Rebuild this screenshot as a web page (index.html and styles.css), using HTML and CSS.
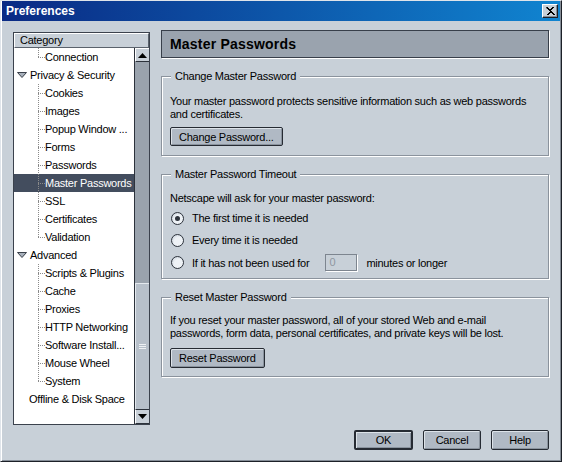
FILE: index.html
```html
<!DOCTYPE html>
<html>
<head>
<meta charset="utf-8">
<link rel="stylesheet" href="styles.css">
</head>
<body>
<div class="window">
  <div class="titlebar">
    <span class="title">Preferences</span>
    <span class="close"><svg width="10" height="9" viewBox="0 0 10 9"><path d="M1 0h2v1h1v1h2v-1h1v-1h2v1h-1v1h-1v1h-1v1h1v1h1v1h1v1h1v1h-2v-1h-1v-1h-2v1h-1v1h-2v-1h1v-1h1v-1h1v-1h-1v-1h-1v-1h-1z" fill="#000"/></svg></span>
  </div>
  <div class="content">
    <div class="tree">
      <div class="tree-head">Category</div>
      <div class="tree-body">
        <div class="rows">
          <div class="row child"><span class="branch last"></span>Connection</div>
          <div class="row top"><svg class="twisty" width="10" height="6" viewBox="0 0 10 6"><path d="M0.5 0.5h9l-4.5 5z" fill="#a7b0bb" stroke="#3a404a"/></svg>Privacy &amp; Security</div>
          <div class="row child"><span class="branch"></span>Cookies</div>
          <div class="row child"><span class="branch"></span>Images</div>
          <div class="row child"><span class="branch"></span>Popup Window ...</div>
          <div class="row child"><span class="branch"></span>Forms</div>
          <div class="row child"><span class="branch"></span>Passwords</div>
          <div class="row child selected"><span class="branch"></span>Master Passwords</div>
          <div class="row child"><span class="branch"></span>SSL</div>
          <div class="row child"><span class="branch"></span>Certificates</div>
          <div class="row child"><span class="branch last"></span>Validation</div>
          <div class="row top"><svg class="twisty" width="10" height="6" viewBox="0 0 10 6"><path d="M0.5 0.5h9l-4.5 5z" fill="#a7b0bb" stroke="#3a404a"/></svg>Advanced</div>
          <div class="row child"><span class="branch"></span>Scripts &amp; Plugins</div>
          <div class="row child"><span class="branch"></span>Cache</div>
          <div class="row child"><span class="branch"></span>Proxies</div>
          <div class="row child"><span class="branch"></span>HTTP Networking</div>
          <div class="row child"><span class="branch"></span>Software Install...</div>
          <div class="row child"><span class="branch"></span>Mouse Wheel</div>
          <div class="row child"><span class="branch last"></span>System</div>
          <div class="row leaf">Offline &amp; Disk Space</div>
        </div>
        <div class="scrollbar">
          <div class="sb-btn"><svg width="9" height="5" viewBox="0 0 9 5"><path d="M4.5 0L9 5H0z" fill="#000"/></svg></div>
          <div class="sb-track"></div>
          <div class="sb-thumb"><span class="grip"></span></div>
          <div class="sb-btn down"><svg width="9" height="5" viewBox="0 0 9 5"><path d="M0 0h9L4.5 5z" fill="#000"/></svg></div>
        </div>
      </div>
    </div>
    <div class="main">
      <div class="page-head">Master Passwords</div>
      <fieldset class="group g1">
        <legend>Change Master Password</legend>
        <p>Your master password protects sensitive information such as web passwords and certificates.</p>
        <button class="btn">Change Password...</button>
      </fieldset>
      <fieldset class="group g2">
        <legend>Master Password Timeout</legend>
        <p>Netscape will ask for your master password:</p>
        <div class="radio-row"><span class="radio checked"></span>The first time it is needed</div>
        <div class="radio-row"><span class="radio"></span>Every time it is needed</div>
        <div class="radio-row tall"><span class="radio"></span>If it has not been used for<span class="minutes">0</span>minutes or longer</div>
      </fieldset>
      <fieldset class="group g3">
        <legend>Reset Master Password</legend>
        <p>If you reset your master password, all of your stored Web and e-mail passwords, form data, personal certificates, and private keys will be lost.</p>
        <button class="btn">Reset Password</button>
      </fieldset>
    </div>
  </div>
  <div class="footer">
    <button class="btn dlg default">OK</button>
    <button class="btn dlg">Cancel</button>
    <button class="btn dlg">Help</button>
  </div>
</div>
</body>
</html>
```

FILE: styles.css
```css
* { box-sizing: border-box; }
html, body { margin: 0; padding: 0; }
body {
  width: 562px;
  height: 462px;
  font-family: "Liberation Sans", Arial, sans-serif;
  font-size: 11px;
  letter-spacing: -0.25px;
  color: #000;
  background: #c8d0d8;
}
.window {
  width: 562px;
  height: 462px;
  background: #c8d0d8;
  border-top: 1px solid #dfe4ea;
  border-left: 1px solid #dfe4ea;
  border-right: 1px solid #1c2028;
  border-bottom: 1px solid #1c2028;
  box-shadow: inset 1px 0 0 #ffffff, inset -1px -1px 0 #858d97;
  padding: 0 1px 1px 1px;
  display: flex;
  flex-direction: column;
}
.titlebar {
  height: 20px;
  background: linear-gradient(to right, #0a2a84, #1084d0);
  display: flex;
  align-items: center;
  justify-content: space-between;
  padding: 0 2px 0 4px;
}
.title {
  color: #fff;
  font-weight: bold;
  font-size: 12px;
  letter-spacing: 0;
}
.close {
  width: 16px;
  height: 14px;
  background: #c8d0d8;
  border-top: 1px solid #fff;
  border-left: 1px solid #fff;
  border-right: 1px solid #1c2028;
  border-bottom: 1px solid #1c2028;
  box-shadow: inset -1px -1px 0 #858d97;
  display: flex;
  align-items: center;
  justify-content: center;
}
.content {
  display: flex;
  gap: 11px;
  padding: 11px 0 0 11px;
}
.tree {
  width: 137px;
  height: 393px;
  border: 1px solid #3b424d;
  background: #fff;
  display: flex;
  flex-direction: column;
}
.tree-head {
  height: 15px;
  background: #c8d0d8;
  border-top: 1px solid #fff;
  border-left: 1px solid #fff;
  border-bottom: 1px solid #5a626c;
  border-right: 1px solid #5a626c;
  padding-left: 5px;
  line-height: 13px;
}
.tree-body {
  flex: 1;
  display: flex;
  min-height: 0;
}
.rows {
  width: 120px;
}
.row {
  height: 18px;
  display: flex;
  align-items: center;
  white-space: nowrap;
  padding-bottom: 1px;
}
.row.child { padding-left: 24px; }
.row.top { padding-left: 3px; }
.row.leaf { padding-left: 15px; }
.twisty { margin-right: 3px; margin-top: 1px; }
.branch {
  width: 7px;
  height: 18px;
  margin-bottom: -1px;
  flex: none;
  background:
    repeating-linear-gradient(to bottom, #8a8a8a 0 1px, transparent 1px 2px) left top / 1px 100% no-repeat,
    repeating-linear-gradient(to right, #8a8a8a 0 1px, transparent 1px 2px) left 9px / 100% 1px no-repeat;
}
.branch.last {
  background-size: 1px 10px, 100% 1px;
}
.row.selected {
  background: #434d5e;
  color: #fff;
}
.scrollbar {
  width: 15px;
  border-left: 1px solid #2c323b;
  display: flex;
  flex-direction: column;
  background: #9aa3ad;
}
.sb-btn {
  height: 14px;
  background: #c8d0d8;
  border-top: 1px solid #fff;
  border-left: 1px solid #fff;
  border-bottom: 1px solid #2c323b;
  display: flex;
  align-items: center;
  justify-content: center;
}
.sb-btn.down { border-top: 1px solid #2c323b; height: 15px; }
.sb-track { flex: 1; }
.sb-thumb {
  height: 126px;
  background: #b7c0ca;
  border-top: 1px solid #e4e9ee;
  border-left: 1px solid #e4e9ee;
  display: flex;
  align-items: center;
  justify-content: center;
}
.grip {
  width: 7px;
  height: 5px;
  border-top: 1px solid #eef1f4;
  border-bottom: 1px solid #eef1f4;
  background: linear-gradient(#eef1f4, #eef1f4) center / 100% 1px no-repeat;
}
.main {
  width: 388px;
  display: flex;
  flex-direction: column;
  margin-top: -2px;
}
.page-head {
  height: 28px;
  background: #9aa3ae;
  border: 1px solid #383f4a;
  box-shadow: 1px 1px 0 #fff;
  font-weight: bold;
  font-size: 14px;
  letter-spacing: 0.2px;
  line-height: 26px;
  padding-left: 8px;
}
.group {
  margin: 11px 0 0 0;
  border: 1px solid #8b939d;
  box-shadow: inset 1px 1px 0 #fff, 1px 1px 0 #fff;
  padding: 0 8px 9px 8px;
  min-width: 0;
}
.group legend {
  margin-left: 1px;
  padding: 0 4px;
  background: #c8d0d8;
  line-height: 14px;
}
.group p {
  margin: 0;
  line-height: 13px;
}
.g1 p { margin-top: 12px; }
.g1 .btn { margin-top: 6px; }
.g2 { padding-bottom: 4px; }
.g2 p { margin-top: 11px; margin-bottom: 2px; }
.g3 { padding-bottom: 8px; }
.g3 p { margin-top: 10px; }
.btn {
  font-family: inherit;
  font-size: 11px;
  letter-spacing: -0.25px;
  height: 19px;
  background: #b0b9c4;
  border: 1px solid #262b33;
  border-radius: 2px;
  box-shadow: inset 1px 1px 0 #dde3e9, inset -1px -1px 0 #8a939e;
  padding: 0 8px;
  color: #000;
  margin-top: 8px;
  display: block;
}
.g3 .btn { height: 20px; }
.radio-row {
  height: 22px;
  display: flex;
  align-items: center;
  padding-left: 1px;
}
.radio-row.tall { height: 23px; }
.radio {
  width: 13px;
  height: 13px;
  border-radius: 50%;
  border: 1px solid #2d333c;
  background: radial-gradient(circle at 60% 60%, #eef2f6 0 45%, #cfd7e0 80%);
  margin-right: 8px;
  flex: none;
  display: flex;
  align-items: center;
  justify-content: center;
}
.radio.checked::after {
  content: "";
  width: 5px;
  height: 5px;
  border-radius: 50%;
  background: #2d333c;
}
.minutes {
  width: 32px;
  height: 17px;
  border: 1px solid #7d858f;
  box-shadow: 1px 1px 0 #fff;
  color: #8f97a1;
  padding-left: 3px;
  line-height: 15px;
  margin: 0 9px 0 16px;
}
.footer {
  display: flex;
  justify-content: flex-end;
  gap: 10px;
  padding: 5px 11px 0 0;
}
.btn.dlg {
  margin-top: 0;
  height: 20px;
  padding: 0;
}
.footer .dlg:nth-child(1) { width: 59px; }
.footer .dlg:nth-child(2) { width: 58px; }
.footer .dlg:nth-child(3) { width: 58px; }
.btn.default { border-width: 2px; }
```
